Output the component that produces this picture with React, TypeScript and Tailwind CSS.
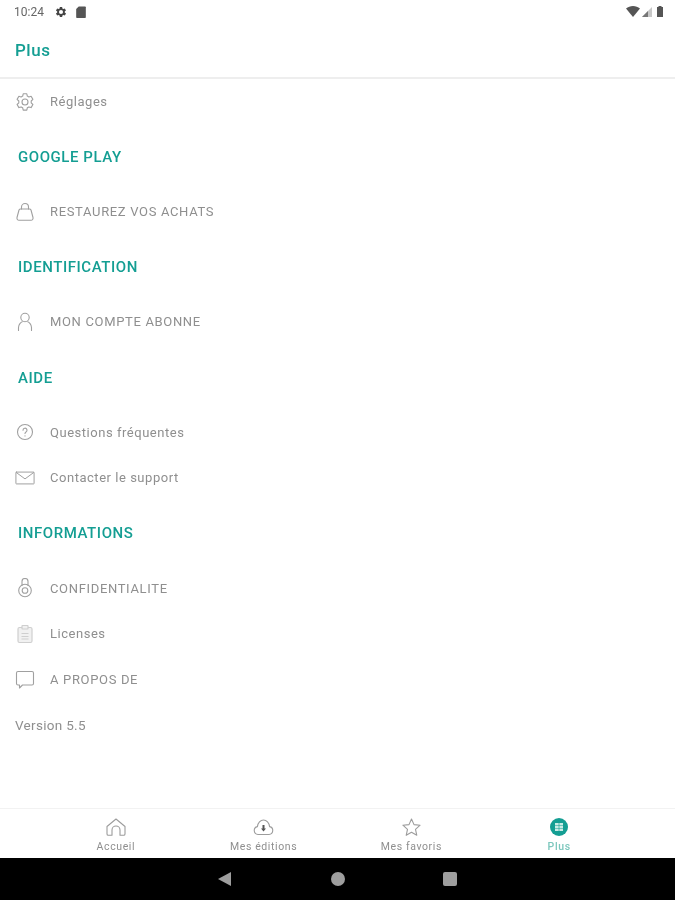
import type { ReactNode } from 'react'

const stroke = { fill: 'none', stroke: 'currentColor', strokeWidth: 1.1, strokeLinecap: 'round', strokeLinejoin: 'round' } as const

function Gear() {
  return (
    <svg width="20" height="20" viewBox="0 0 20 20" {...stroke}>
      <path d="M8.2 1.8h3.6l.5 2.3 1.6.9 2.2-.7 1.8 3.1-1.7 1.6v1.9l1.7 1.6-1.8 3.1-2.2-.7-1.6.9-.5 2.3H8.2l-.5-2.3-1.6-.9-2.2.7-1.8-3.1 1.7-1.6V9l-1.7-1.6 1.8-3.1 2.2.7 1.6-.9z" />
      <circle cx="10" cy="10" r="3" />
    </svg>
  )
}

function Bag() {
  return (
    <svg width="20" height="20" viewBox="0 0 20 20" {...stroke}>
      <path d="M6.5 7V5a3.500 3.500 0 0 1 7 0v2" />
      <path d="M5.500 7h9c.8 0 1.200.4 1.500 1l2 7.500c.3 1.700-.6 2.800-2 2.800H4c-1.400 0-2.300-1.100-2-2.800L4 8c.3-.6.7-1 1.500-1z" />
    </svg>
  )
}

function Person() {
  return (
    <svg width="20" height="20" viewBox="0 0 20 20" {...stroke}>
      <circle cx="10" cy="5.500" r="4.200" />
      <path d="M3.500 18.500V15.500c0-3 2.500-5.500 3.800-5.800M16.500 18.500V15.500c0-3-2.500-5.500-3.800-5.800" />
    </svg>
  )
}

function Question() {
  return (
    <svg width="20" height="20" viewBox="0 0 20 20" {...stroke}>
      <circle cx="10" cy="10" r="7.500" />
      <path d="M8 8.200a2 2 0 1 1 3 1.700c-.7.400-1 .8-1 1.600" />
      <path d="M10 13.800v.2" />
    </svg>
  )
}

function Mail() {
  return (
    <svg width="22" height="16" viewBox="0 0 22 16" {...stroke}>
      <rect x="1" y="1.500" width="20" height="13" rx="0.500" />
      <path d="M1.500 2l9.500 7 9.500-7" />
    </svg>
  )
}

function Lock() {
  return (
    <svg width="20" height="20" viewBox="0 0 20 20" {...stroke}>
      <path d="M7 7.500V3.500a3 3 0 0 1 6 0v4" />
      <circle cx="10" cy="12.500" r="6.300" />
      <circle cx="10" cy="12.500" r="2.800" />
    </svg>
  )
}

function Clipboard() {
  return (
    <svg width="20" height="20" viewBox="0 0 20 20" fill="none" stroke="#cfcfcf" strokeWidth="1.200">
      <rect x="3" y="3.500" width="14" height="15" rx="1.500" fill="#f1f1f1" />
      <rect x="7" y="1.500" width="6" height="3.500" rx="0.500" fill="#f1f1f1" />
      <path d="M6.500 9.500h7M6.500 12.500h7M6.500 15h7" />
    </svg>
  )
}

function Bubble() {
  return (
    <svg width="20" height="20" viewBox="0 0 20 20" {...stroke}>
      <path d="M3 1.500h14c.9 0 1.500.6 1.500 1.500v10.500c0 .9-.6 1.500-1.500 1.500H7.500L4.500 18v-3H3c-.9 0-1.500-.6-1.500-1.500V3c0-.9.6-1.500 1.500-1.500z" />
    </svg>
  )
}

function Row({ icon, caps, children }: { icon: ReactNode; caps?: boolean; children: ReactNode }) {
  return (
    <div className="flex h-[45.7px] items-center pl-[15px]">
      <span className="flex w-5 items-center justify-center text-[#a0a0a0]">{icon}</span>
      <span className={`ml-[15px] text-[13px] text-[#8f8f8f] ${caps ? 'tracking-[0.66px]' : 'tracking-[0.53px]'}`}>{children}</span>
    </div>
  )
}

function Section({ children }: { children: ReactNode }) {
  return (
    <div className="flex h-[64.500px] items-center pl-[18px] pt-[1px] text-[15px] font-medium tracking-[0.56px] text-[#149e93]">
      {children}
    </div>
  )
}

function Tab({ icon, label, active }: { icon: ReactNode; label: string; active?: boolean }) {
  return (
    <div className="flex flex-col items-center pt-[8px]">
      <span className="flex h-5 items-center text-[#9c9c9c]">{icon}</span>
      <span className={`mt-[3px] text-[10.500px] leading-[14px] tracking-[0.6px] ${active ? 'font-medium text-[#7cc7bd]' : 'text-[#8f8f8f]'}`}>
        {label}
      </span>
    </div>
  )
}

export default function App() {
  return (
    <div className="flex h-[900px] w-[675px] flex-col overflow-hidden bg-white font-['Roboto',sans-serif] blur-[0.4px]">
      <div className="flex h-[23px] shrink-0 items-center justify-between pl-[14px] pr-[12px]">
        <div className="flex items-center">
          <span className="text-[12px] text-[#666666]">10:24</span>
          <svg className="ml-[10px]" width="14" height="14" viewBox="0 0 24 24" fill="#444">
            <path d="M19.400 13a7.600 7.600 0 0 0 0-2l2.100-1.600-2-3.500-2.500 1a7.400 7.400 0 0 0-1.700-1L15 3.300h-4l-.4 2.600c-.6.300-1.200.6-1.700 1l-2.500-1-2 3.500L6.500 11a7.600 7.600 0 0 0 0 2l-2.100 1.600 2 3.500 2.500-1c.5.400 1.100.7 1.700 1l.4 2.600h4l.4-2.600c.6-.3 1.200-.6 1.700-1l2.500 1 2-3.500zM13 15.500a3.500 3.500 0 1 1 0-7 3.500 3.500 0 0 1 0 7z" transform="translate(-1)" />
          </svg>
          <svg className="ml-[8px]" width="10" height="12" viewBox="0 0 11 13" fill="#555">
            <path d="M3 .5h7a.8.8 0 0 1 .8.8v10.900a.8.8 0 0 1-.8.8H1a.8.8 0 0 1-.8-.8V3.300z" />
          </svg>
        </div>
        <div className="flex items-center">
          <svg width="14" height="11" viewBox="0 0 14 11" fill="#555"><path d="M0 2.500C2 .9 4.400 0 7 0s5 .9 7 2.500L7 11z" /></svg>
          <svg className="ml-[2px]" width="10" height="10" viewBox="0 0 10 10"><path d="M10 0v10H0z" fill="#c8c8c8" /><path d="M6 4v6H0z" fill="#777" /></svg>
          <svg className="ml-[5px]" width="6" height="11" viewBox="0 0 6 11" fill="#555"><path d="M1.500 0h3v1H6v10H0V1h1.500z" /></svg>
        </div>
      </div>

      <div className="flex h-[56px] shrink-0 items-center border-b-2 border-[#eeeeee] pt-[1px] pl-[15px] text-[17px] font-medium tracking-[0.5px] text-[#149e93]">
        Plus
      </div>

      <div className="flex-1">
        <Row icon={<Gear />}>Réglages</Row>
        <Section>GOOGLE PLAY</Section>
        <Row caps icon={<Bag />}>RESTAUREZ VOS ACHATS</Row>
        <Section>IDENTIFICATION</Section>
        <Row caps icon={<Person />}>MON COMPTE ABONNE</Row>
        <Section>AIDE</Section>
        <Row icon={<Question />}>Questions fréquentes</Row>
        <Row icon={<Mail />}>Contacter le support</Row>
        <Section>INFORMATIONS</Section>
        <Row caps icon={<Lock />}>CONFIDENTIALITE</Row>
        <Row icon={<Clipboard />}>Licenses</Row>
        <Row caps icon={<Bubble />}>A PROPOS DE</Row>
        <div className="flex h-[45.7px] items-center pl-[15px] text-[13.500px] tracking-[0.3px] text-[#8f8f8f]">Version 5.5</div>
      </div>

      <div className="grid h-[50px] shrink-0 grid-cols-4 border-t border-[#f2f2f2] px-[42px]">
        <Tab
          label="Accueil"
          icon={
            <svg width="20" height="18" viewBox="0 0 20 18" {...stroke}>
              <path d="M1 8.500L10 1l9 7.500V16c0 .8-.5 1.300-1.300 1.300h-3.700V12a4 4 0 0 0-8 0v5.300H2.300C1.500 17.300 1 16.800 1 16z" />
            </svg>
          }
        />
        <Tab
          label="Mes éditions"
          icon={
            <svg width="21" height="17" viewBox="0 0 21 17">
              <path d="M5 15.500a4 4 0 0 1-.6-7.900C4.800 3.800 7.500 1 10.500 1s5.700 2.800 6.100 6.600a4 4 0 0 1-.6 7.900z" fill="none" stroke="currentColor" strokeWidth="1.100" strokeLinejoin="round" />
              <path d="M9.500 6h2v3.500h1.500l-2.500 3-2.500-3h1.500z" fill="#555" />
            </svg>
          }
        />
        <Tab
          label="Mes favoris"
          icon={
            <svg width="19" height="18" viewBox="0 0 19 18" {...stroke}>
              <path d="M9.500 1l2.500 5.600 6.100.6-4.600 4.100 1.300 6-5.300-3.100-5.300 3.100 1.300-6L.9 7.200 7 6.600z" />
            </svg>
          }
        />
        <Tab
          active
          label="Plus"
          icon={
            <svg width="18" height="18" viewBox="0 0 18 18">
              <circle cx="9" cy="9" r="9" fill="#149e93" />
              <path d="M5 5h8v2.400H5zM5 7.900h8v2.200H5zM5 10.600h8V13H5z" fill="#c9ebe6" />
              <path d="M9 5v8" stroke="#149e93" strokeWidth="0.600" />
            </svg>
          }
        />
      </div>

      <div className="flex h-[42px] shrink-0 items-center bg-black">
        <svg className="ml-[218px]" width="13" height="14" viewBox="0 0 13 14" fill="#9e9e9e"><path d="M13 0v14L0 7z" /></svg>
        <span className="ml-[100px] h-[14px] w-[14px] rounded-full bg-[#9e9e9e]" />
        <span className="ml-[98px] h-[14px] w-[14px] rounded-[2px] bg-[#9e9e9e]" />
      </div>
    </div>
  )
}
